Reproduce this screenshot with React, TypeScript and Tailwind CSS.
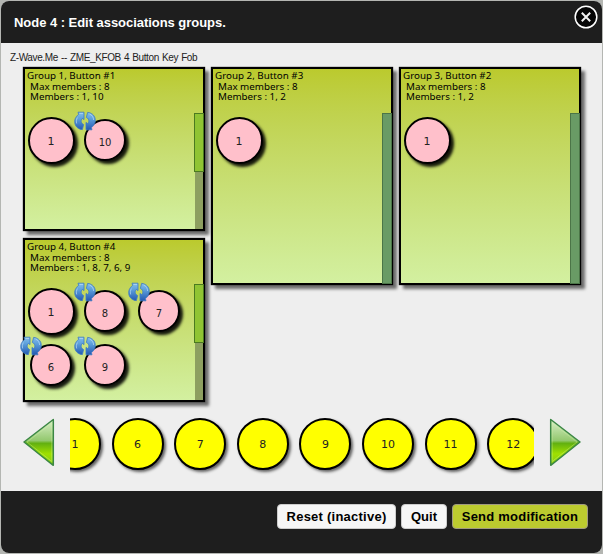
import React from "react";

type Member = { id: number; shift?: boolean };
type Group = { title: string; members: string; nodes: Member[]; tall?: boolean };

const groups: Group[] = [
  { title: "Group 1, Button #1", members: "1, 10", nodes: [{ id: 1 }, { id: 10, shift: true }] },
  { title: "Group 4, Button #4", members: "1, 8, 7, 6, 9", nodes: [{ id: 1 }, { id: 8, shift: true }, { id: 7, shift: true }, { id: 6, shift: true }, { id: 9, shift: true }] },
  { title: "Group 2, Button #3", members: "1, 2", nodes: [{ id: 1 }], tall: true },
  { title: "Group 3, Button #2", members: "1, 2", nodes: [{ id: 1 }], tall: true },
];

function SyncIcon() {
  return (
    <svg className="absolute -left-[12px] -top-[10px] h-[20px] w-[22px]" viewBox="0 0 22 20">
      <defs>
        <linearGradient id="sync" x1="0" y1="0" x2="0" y2="20" gradientUnits="userSpaceOnUse">
          <stop offset="0" stopColor="#8cc4ee" />
          <stop offset="0.4" stopColor="#5c9edb" />
          <stop offset="1" stopColor="#1c50ac" />
        </linearGradient>
      </defs>
      <g fill="url(#sync)" stroke="#3b7ac4" strokeWidth="0.8" strokeLinejoin="round">
        <path d="M4 1.2H10V8.6L8.400 7.400C6.600 9 6.600 12 9.600 13.600L8.400 18.600C.4 18-2.200 8.500 4.600 3.400Z" />
        <path d="M18 18.800H12V11.400L13.600 12.600C15.400 11 15.400 8 12.400 6.400L13.600 1.400C21.600 2 24.200 11.500 17.400 16.600Z" />
      </g>
      <path d="M5.500 2.400H9M3.400 6.500C2.300 8.500 2.100 10.500 2.700 12.500M15.500 3C18.200 4.200 19.600 6.500 19.600 9" fill="none" stroke="#c8e5f8" strokeOpacity=".6" />
    </svg>
  );
}

function MemberNode({ id, shift }: Member) {
  return (
    <div className="flex h-[54px] w-[54px] items-center justify-center">
      <div
        className={
          "relative flex items-center justify-center rounded-full border-2 border-black bg-[#ffc0cb] pt-[4px] shadow-[3px_3px_3px_rgba(0,0,0,0.9)] " +
          (shift ? "h-[42px] w-[42px] text-[10px]" : "h-[47px] w-[47px] text-[11px]")
        }
      >
        {shift && <SyncIcon />}
        <span className="text-[#222]">{id}</span>
      </div>
    </div>
  );
}

function GroupPanel({ title, members, nodes, tall }: Group) {
  return (
    <section
      className={
        "relative w-[182px] border-2 border-black bg-linear-to-b from-[#bbca2d] to-[#d3f0a0] shadow-[0_0_1px_#000,4px_4px_3px_rgba(0,0,0,0.55)] " +
        (tall ? "h-[218px]" : "h-[164px]")
      }
    >
      <div className="whitespace-pre pl-[2px] pt-[2px] font-['Noto_Sans',sans-serif] text-[9.8px] leading-[10.7px] text-black">
        <p>{title}</p>
        <p className="pl-[3px]">Max members : 8</p>
        <p className="pl-[3px]">Members : {members}</p>
      </div>
      <div className="-ml-[1px] mt-[10px] flex w-[170px] flex-wrap font-['DejaVu_Sans',sans-serif]">
        {nodes.map((n) => (
          <MemberNode key={n.id} {...n} />
        ))}
      </div>
      {tall ? (
        <div className="absolute -right-[1px] bottom-[-1px] top-[44px] w-[10px] border border-[#4b7547] bg-[#699b65]" />
      ) : (
        <div className="absolute -right-[1px] bottom-0 top-[44px] w-[10px]">
          <div className="h-[59px] border border-[#4b7a20] bg-[#90c433]" />
          <div className="ml-px h-[57px] w-[8px] bg-[#8d9f60]" />
        </div>
      )}
    </section>
  );
}

function Arrow({ flip }: { flip?: boolean }) {
  const id = flip ? "arrow-r" : "arrow-l";
  return (
    <svg className={"h-[49px] w-[32px] shrink-0 " + (flip ? "-scale-x-100" : "")} viewBox="0 0 32 49">
      <defs>
        <linearGradient id={id} x1="0" y1="0" x2="0" y2="1">
          <stop offset="0" stopColor="#d9efc9" />
          <stop offset="0.46" stopColor="#93c86e" />
          <stop offset="0.52" stopColor="#62b010" />
          <stop offset="0.75" stopColor="#9fe000" />
          <stop offset="1" stopColor="#86cc10" />
        </linearGradient>
      </defs>
      <path d="M30.3 1.5V47.3L1 24Z" fill={"url(#" + id + ")"} stroke="#3b8744" strokeWidth="1.5" strokeLinejoin="round" />
      <path d="M28.8 5V43.500L4 24Z" fill="none" stroke="#d6f5a8" strokeOpacity=".45" strokeWidth="0.8" />
    </svg>
  );
}

const button = "h-[25px] rounded-[4px] border text-[13px] font-bold leading-[24px] text-black whitespace-nowrap";

export default function App() {
  return (
    <div className="h-[554px] w-[603px] bg-[#b4b6b2] p-px font-['Liberation_Sans',Arial,sans-serif]">
      <div className="flex h-[552px] w-[601px] flex-col overflow-hidden rounded-[8px] bg-[#eee]">
        <header className="flex h-[42px] shrink-0 justify-between bg-[#1e1e1e] pl-[13px] pr-[3px]">
          <h1 className="pt-[13px] text-[13px] font-bold leading-[18px] tracking-[-0.04px] text-white">Node 4 : Edit associations groups.</h1>
          <svg className="mt-[3px] h-[26px] w-[26px]" viewBox="0 0 26 26">
            <circle cx="13" cy="13" r="10.8" fill="#050505" stroke="#fff" strokeWidth="1.5" />
            <path d="M8.800 8.800l8.400 8.400M17.200 8.800l-8.400 8.400" stroke="#f2f2f2" strokeWidth="2" />
          </svg>
        </header>
        <main className="flex h-[448px] shrink-0 flex-col pl-[9px]">
          <p className="mt-[8px] h-[16px] whitespace-nowrap text-[10px] leading-[14px] tracking-[-0.38px] [word-spacing:0.7px] text-[#222]">Z-Wave.Me -- ZME_KFOB 4 Button Key Fob</p>
          <div className="ml-[13px] flex h-[335px] gap-[6px]">
            <div className="flex flex-col gap-[7px]">
              <GroupPanel {...groups[0]} />
              <GroupPanel {...groups[1]} />
            </div>
            <GroupPanel {...groups[2]} />
            <GroupPanel {...groups[3]} />
          </div>
          <div className="ml-[13px] mt-[16px] flex w-[558px] items-start justify-between">
            <Arrow />
            <div className="flex h-[60px] w-[464px] overflow-hidden">
              <div className="-ml-[21px] -mt-[0.5px] flex gap-[10.6px] font-['DejaVu_Sans',sans-serif] text-[11px] text-[#222]">
                {[1, 6, 7, 8, 9, 10, 11, 12].map((n) => (
                  <div key={n} className="flex h-[52px] w-[52px] shrink-0 items-center justify-center rounded-full border-2 border-black bg-[#ff0] pt-[4px] shadow-[2px_2px_3px_rgba(0,0,0,0.6)]">
                    {n}
                  </div>
                ))}
              </div>
            </div>
            <Arrow flip />
          </div>
        </main>
        <footer className="flex grow justify-end gap-[5px] bg-[#1e1e1e] pr-[14px] pt-[13px]">
          <button className={button + " w-[119px] border-[#ccc] bg-[#f6f6f6] tracking-[0.24px]"}>Reset (inactive)</button>
          <button className={button + " w-[46px] border-[#ccc] bg-[#f6f6f6] tracking-[0px]"}>Quit</button>
          <button className={button + " w-[136px] border-[#a09a80] bg-[#bccb2f] tracking-[0.22px]"}>Send modification</button>
        </footer>
      </div>
    </div>
  );
}
